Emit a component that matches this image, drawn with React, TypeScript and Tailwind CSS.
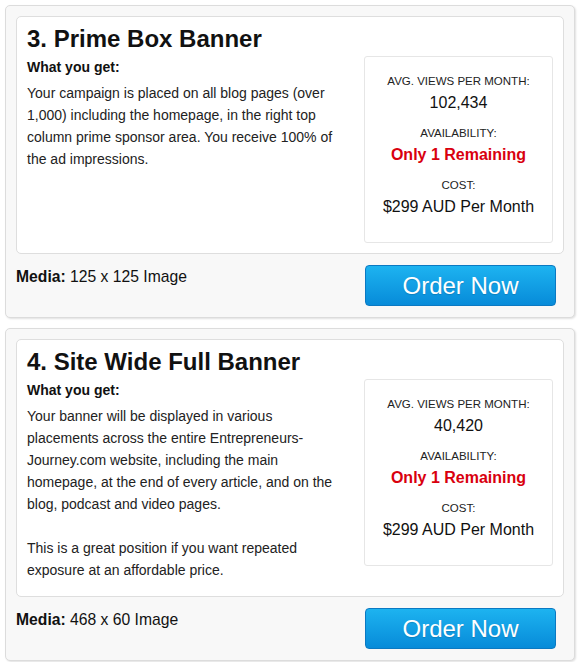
import React from "react";

type Card = {
  title: string;
  paras: string[];
  views: string;
  media: string;
};

const cards: Card[] = [
  {
    title: "3. Prime Box Banner",
    paras: [
      "Your campaign is placed on all blog pages (over 1,000) including the homepage, in the right top column prime sponsor area. You receive 100% of the ad impressions.",
    ],
    views: "102,434",
    media: "125 x 125 Image",
  },
  {
    title: "4. Site Wide Full Banner",
    paras: [
      "Your banner will be displayed in various placements across the entire Entrepreneurs-Journey.com website, including the main homepage, at the end of every article, and on the blog, podcast and video pages.",
      "This is a great position if you want repeated exposure at an affordable price.",
    ],
    views: "40,420",
    media: "468 x 60 Image",
  },
];

function Stats({ views }: { views: string }) {
  return (
    <div className="w-[189px] h-[187px] shrink-0 bg-white border border-[#e6e6e6] rounded-[3px] pt-[14px] flex flex-col items-center text-center">
      <div className="text-[11.5px] leading-[20px] text-[#222]">AVG. VIEWS PER MONTH:</div>
      <div className="text-[16px] leading-[24px] text-[#111] mb-[8px]">{views}</div>
      <div className="text-[11.5px] leading-[20px] text-[#222]">AVAILABILITY:</div>
      <div className="text-[16px] leading-[24px] font-bold text-[#d9000e] mb-[8px]">Only 1 Remaining</div>
      <div className="text-[11.5px] leading-[20px] text-[#222]">COST:</div>
      <div className="text-[16px] leading-[24px] text-[#111]">$299 AUD Per Month</div>
    </div>
  );
}

function CardView({ c }: { c: Card }) {
  return (
    <div className="w-[570px] bg-[#f8f8f8] border border-[#dcdcdc] rounded-[5px] shadow-[1px_1px_2px_rgba(0,0,0,0.12)] p-[10px]">
      <div className="bg-white border border-[#dedede] rounded-[5px] px-[10px] pt-[10px] pb-[10px]">
        <h2 className="text-[24px] leading-[24px] font-bold text-[#111] mb-[5px]">{c.title}</h2>
        <div className="flex gap-[20px]">
          <div className="flex-1 min-w-0">
            <div className="text-[14px] leading-[22px] font-bold text-[#111]">What you get:</div>
            {c.paras.map((p, i) => (
              <p
                key={i}
                className={
                  "text-[14px] leading-[22px] text-[#222] mt-[4px] " +
                  (i < c.paras.length - 1 ? "mb-[22px]" : "mb-[5px]")
                }
              >
                {p}
              </p>
            ))}
          </div>
          <Stats views={c.views} />
        </div>
      </div>
      <div className="flex justify-between items-start pt-[11px] pb-[1px]">
        <div className="text-[15.7px] leading-[22px] mt-[1px] text-[#111]">
          <span className="font-bold">Media:</span> {c.media}
        </div>
        <button className="w-[191px] h-[41px] mr-[8px] rounded-[4px] border border-[#0b79c2] bg-gradient-to-b from-[#1db3f0] to-[#078bd9] text-white text-[24px] leading-none [text-shadow:0_1px_1px_rgba(0,0,0,0.15)]">
          Order Now
        </button>
      </div>
    </div>
  );
}

export default function App() {
  return (
    <div
      className="w-[581px] h-[662px] bg-white pl-[5px] pt-[5px] flex flex-col gap-[10px]"
      style={{ fontFamily: '"Liberation Sans", Arial, sans-serif' }}
    >
      {cards.map((c, i) => (
        <CardView key={i} c={c} />
      ))}
    </div>
  );
}
